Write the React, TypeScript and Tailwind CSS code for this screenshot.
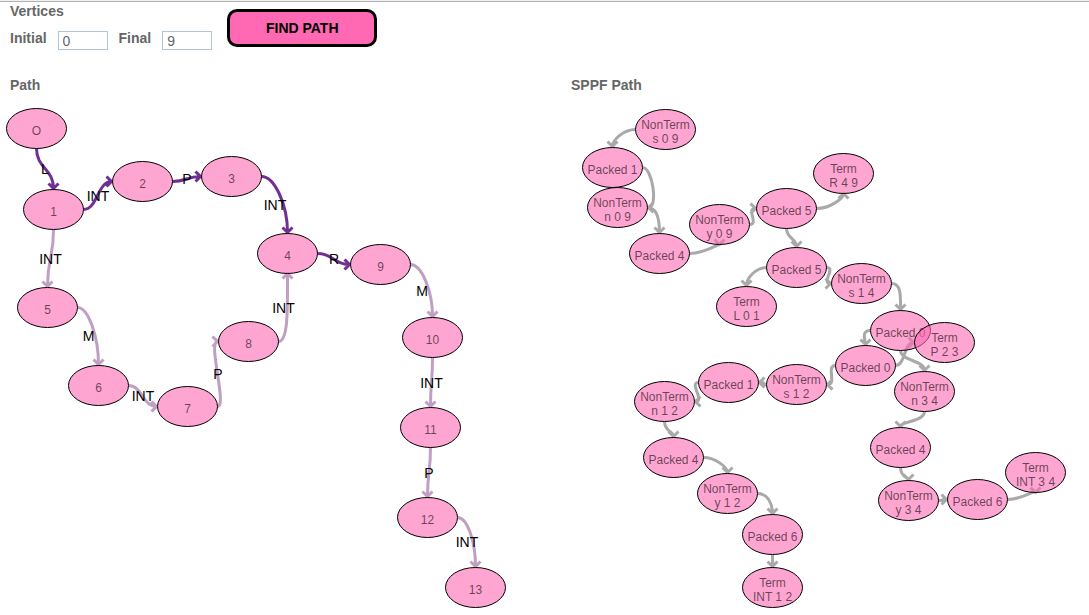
import { useState } from "react";

type Side = "top" | "bottom" | "left" | "right";
type GraphNode = { x: number; y: number; lines: string[] };
type Tone = "active" | "idle" | "plain";
type Edge = { from: string; fromSide: Side; to: string; toSide: Side; tone: Tone; label?: string };

const RX = 30;
const RY = 20;
const TONES: Record<Tone, string> = { active: "#702f92", idle: "#bf9fc2", plain: "#a9a9a9" };

const node = (x: number, y: number, ...lines: string[]): GraphNode => ({ x, y, lines });
const edge = (from: string, fromSide: Side, to: string, toSide: Side, tone: Tone = "plain", label?: string): Edge => ({
  from, fromSide, to, toSide, tone, label,
});

const pathNodes: Record<string, GraphNode> = {
  n0: node(26, 28, "O"),
  n1: node(43, 109, "1"),
  n2: node(132, 81, "2"),
  n3: node(221, 76, "3"),
  n4: node(277, 153, "4"),
  n5: node(37, 207, "5"),
  n6: node(88, 285, "6"),
  n7: node(177, 306, "7"),
  n8: node(238, 241, "8"),
  n9: node(370, 164, "9"),
  n10: node(422, 237, "10"),
  n11: node(420, 327, "11"),
  n12: node(417, 417, "12"),
  n13: node(465, 487, "13"),
};

const pathEdges: Edge[] = [
  edge("n0", "bottom", "n1", "top", "active", "L"),
  edge("n1", "right", "n2", "left", "active", "INT"),
  edge("n2", "right", "n3", "left", "active", "P"),
  edge("n3", "right", "n4", "top", "active", "INT"),
  edge("n4", "right", "n9", "left", "active", "R"),
  edge("n1", "bottom", "n5", "top", "idle", "INT"),
  edge("n5", "right", "n6", "top", "idle", "M"),
  edge("n6", "right", "n7", "left", "idle", "INT"),
  edge("n7", "right", "n8", "left", "idle", "P"),
  edge("n8", "right", "n4", "bottom", "idle", "INT"),
  edge("n9", "right", "n10", "top", "idle", "M"),
  edge("n10", "bottom", "n11", "top", "idle", "INT"),
  edge("n11", "bottom", "n12", "top", "idle", "P"),
  edge("n12", "right", "n13", "top", "idle", "INT"),
];

const sppfNodes: Record<string, GraphNode> = {
  s09: node(94, 29, "NonTerm", "s 0 9"),
  p1: node(41, 67, "Packed 1"),
  n09: node(46, 107, "NonTerm", "n 0 9"),
  p4: node(88, 153, "Packed 4"),
  y09: node(148, 124, "NonTerm", "y 0 9"),
  p5: node(215, 108, "Packed 5"),
  r49: node(272, 73, "Term", "R 4 9"),
  p5b: node(225, 167, "Packed 5"),
  l01: node(175, 206, "Term", "L 0 1"),
  s14: node(290, 183, "NonTerm", "s 1 4"),
  p0: node(329, 230, "Packed 0"),
  p0b: node(294, 265, "Packed 0"),
  t23: node(373, 242, "Term", "P 2 3"),
  s12: node(225, 284, "NonTerm", "s 1 2"),
  p1b: node(157, 282, "Packed 1"),
  n12: node(93, 301, "NonTerm", "n 1 2"),
  p4b: node(102, 357, "Packed 4"),
  y12: node(156, 393, "NonTerm", "y 1 2"),
  p6: node(201, 434, "Packed 6"),
  i12: node(201, 487, "Term", "INT 1 2"),
  n34: node(353, 291, "NonTerm", "n 3 4"),
  p4c: node(329, 347, "Packed 4"),
  y34: node(337, 400, "NonTerm", "y 3 4"),
  p6b: node(406, 399, "Packed 6"),
  i34: node(464, 372, "Term", "INT 3 4"),
};

const sppfEdges: Edge[] = [
  edge("s09", "left", "p1", "top"),
  edge("p1", "right", "n09", "right"),
  edge("n09", "right", "p4", "top"),
  edge("p4", "right", "y09", "bottom"),
  edge("y09", "right", "p5", "left"),
  edge("p5", "right", "r49", "bottom"),
  edge("p5", "bottom", "p5b", "top"),
  edge("p5b", "left", "l01", "top"),
  edge("p5b", "right", "s14", "left"),
  edge("s14", "right", "p0", "top"),
  edge("p0", "left", "p0b", "top"),
  edge("p0", "bottom", "n34", "top"),
  edge("p0b", "right", "t23", "left"),
  edge("p0b", "left", "s12", "right"),
  edge("s12", "left", "p1b", "right"),
  edge("p1b", "left", "n12", "right"),
  edge("n12", "bottom", "p4b", "top"),
  edge("p4b", "right", "y12", "top"),
  edge("y12", "right", "p6", "top"),
  edge("p6", "bottom", "i12", "top"),
  edge("n34", "bottom", "p4c", "top"),
  edge("p4c", "bottom", "y34", "top"),
  edge("y34", "right", "p6b", "left"),
  edge("p6b", "right", "i34", "bottom"),
];

function anchor(n: GraphNode, side: Side, gap: number): [number, number] {
  if (side === "top") return [n.x, n.y - RY - gap];
  if (side === "bottom") return [n.x, n.y + RY + gap];
  if (side === "left") return [n.x - RX - gap, n.y];
  return [n.x + RX + gap, n.y];
}

function EdgeShape({ item, nodes }: { item: Edge; nodes: Record<string, GraphNode> }) {
  const [x1, y1] = anchor(nodes[item.from], item.fromSide, 0);
  const [x4, y4] = anchor(nodes[item.to], item.toSide, item.toSide === "bottom" ? 0 : 1);
  const dx = Math.max(Math.abs(x1 - x4) / 2, 10);
  const dy = Math.max(Math.abs(y1 - y4) / 2, 10);
  const x2 = item.fromSide === "left" ? x1 - dx : item.fromSide === "right" ? x1 + dx : x1;
  const y2 = item.fromSide === "top" ? y1 - dy : item.fromSide === "bottom" ? y1 + dy : y1;
  const x3 = item.toSide === "left" ? x4 - dx : item.toSide === "right" ? x4 + dx : x4;
  const y3 = item.toSide === "top" ? y1 + dy : item.toSide === "bottom" ? y1 - dy : y4;
  const length = Math.hypot(x4 - x3, y4 - y3) || 1;
  const ux = ((x4 - x3) / length) * 5;
  const uy = ((y4 - y3) / length) * 5;
  return (
    <path
      d={`M${x1} ${y1}C${x2} ${y2} ${x3} ${y3} ${x4} ${y4}M${x4 - ux - uy} ${y4 - uy - ux}L${x4} ${y4}L${x4 - ux + uy} ${y4 - uy + ux}`}
      fill="none"
      stroke={TONES[item.tone]}
      strokeWidth={3}
    />
  );
}

function EdgeLabel({ item, nodes }: { item: Edge; nodes: Record<string, GraphNode> }) {
  const [x1, y1] = anchor(nodes[item.from], item.fromSide, 1);
  const [x4, y4] = anchor(nodes[item.to], item.toSide, 1);
  return (
    <text x={(x1 + x4) / 2} y={(y1 + y4) / 2 + 5} textAnchor="middle" className="fill-black text-sm">
      {item.label}
    </text>
  );
}

function NodeShape({ item }: { item: GraphNode }) {
  const first = item.lines.length > 1 ? item.y - 1 : item.y + 6;
  return (
    <g>
      <ellipse cx={item.x} cy={item.y} rx={RX} ry={RY} fill="#ff69b4" fillOpacity={0.6} stroke="#000000" />
      {item.lines.map((line, i) => (
        <text key={line} x={item.x} y={first + i * 14} textAnchor="middle" fillOpacity={0.6} className="fill-black text-xs">
          {line}
        </text>
      ))}
    </g>
  );
}

function Graph({ title, nodes, edges }: { title: string; nodes: Record<string, GraphNode>; edges: Edge[] }) {
  return (
    <section className="min-w-0">
      <h2 className="text-sm leading-5 font-bold">{title}</h2>
      <svg role="img" aria-label={title} className="mt-1 block h-[512px] w-full overflow-visible">
        <g transform="translate(0.5 1.5)">
          {edges.map((e) => (
            <EdgeShape key={`${e.from}-${e.to}`} item={e} nodes={nodes} />
          ))}
          {Object.entries(nodes).map(([id, n]) => (
            <NodeShape key={id} item={n} />
          ))}
          {edges.filter((e) => e.label).map((e) => (
            <EdgeLabel key={`${e.from}-${e.to}`} item={e} nodes={nodes} />
          ))}
        </g>
      </svg>
    </section>
  );
}

function VertexField({ id, label, value, onChange }: { id: string; label: string; value: string; onChange: (v: string) => void }) {
  return (
    <div className="flex gap-[11px]">
      <label htmlFor={id} className="leading-5">
        {label}
      </label>
      <input
        id={id}
        value={value}
        onChange={(e) => onChange(e.target.value)}
        className="mt-[3px] h-[19px] w-[50px] border border-[#a9c9da] bg-white px-1 text-sm leading-4 font-normal outline-none"
      />
    </div>
  );
}

export default function App() {
  const [initial, setInitial] = useState("0");
  const [final, setFinal] = useState("9");
  return (
    <div className="border-t border-[#f0f0f0] bg-white font-['Liberation_Sans',Arial,sans-serif] text-sm font-bold text-[#666666]">
      <main className="border-t border-[#b0b0b0] px-2.5">
        <form className="flex gap-[15px]" onSubmit={(e) => e.preventDefault()}>
          <fieldset>
            <legend className="leading-[18px]">Vertices</legend>
            <div className="mt-2 flex gap-[11px]">
              <VertexField id="initial" label="Initial" value={initial} onChange={setInitial} />
              <VertexField id="final" label="Final" value={final} onChange={setFinal} />
            </div>
          </fieldset>
          <button type="submit" className="mt-[7px] h-[38px] w-[150px] rounded-[10px] border-3 border-black bg-[#ff69b4] text-sm text-black">
            FIND PATH
          </button>
        </form>
        <div className="mt-[25px] grid grid-cols-2 gap-x-[53px] font-normal">
          <Graph title="Path" nodes={pathNodes} edges={pathEdges} />
          <Graph title="SPPF Path" nodes={sppfNodes} edges={sppfEdges} />
        </div>
      </main>
    </div>
  );
}
